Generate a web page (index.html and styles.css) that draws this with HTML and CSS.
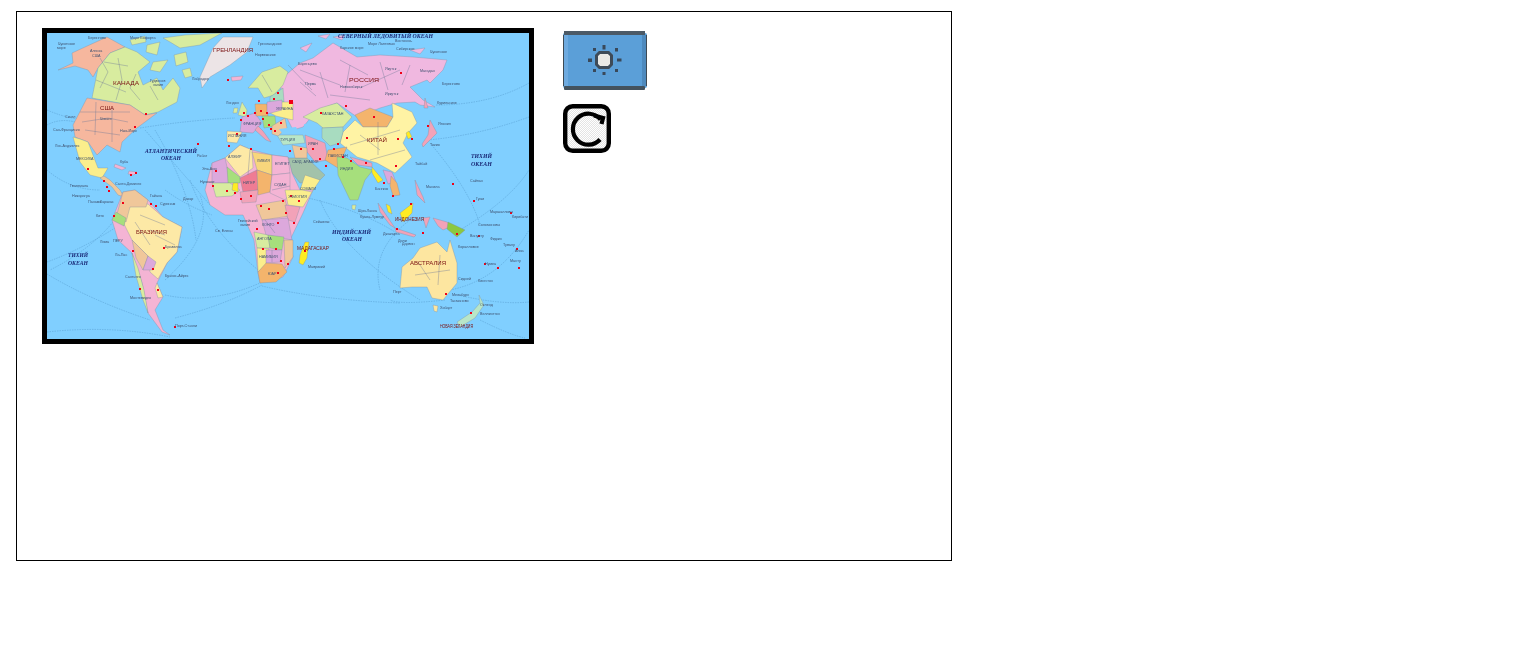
FILE: index.html
```html
<!DOCTYPE html>
<html lang="ru">
<head>
<meta charset="utf-8">
<title>Карта мира</title>
<link rel="stylesheet" href="styles.css">
</head>
<body>
<main class="frame">
  <div class="map-box">
    <svg class="map" viewBox="47 33 482 306" width="482" height="306" role="img" aria-label="Политическая карта мира">
      <defs><filter id="soft" x="0" y="0" width="100%" height="100%"><feGaussianBlur stdDeviation="0.35"/></filter></defs>
      <g filter="url(#soft)">
      <rect class="sea" x="47" y="33" width="482" height="306"/>
      <g class="routes">
        <path d="M47 110 Q75 122 92 118M47 170 Q70 190 100 190M47 125 Q60 118 75 122"/>
        <path d="M140 128 Q190 120 235 118M145 130 Q180 170 210 205M155 130 Q190 190 196 240M165 190 Q185 205 212 215"/>
        <path d="M47 262 Q80 250 115 228M113 222 Q90 250 50 270M47 274 Q90 300 150 320M47 332 Q110 325 170 337"/>
        <path d="M165 295 Q210 305 260 283M175 318 Q225 305 262 285M165 280 Q215 235 200 195M190 180 Q205 225 258 270"/>
        <path d="M262 286 Q320 300 400 303 M320 200 Q340 250 420 300 M410 220 Q370 250 380 290 M304 197 Q360 210 395 232"/>
        <path d="M436 105 Q490 105 529 83M428 140 Q480 135 529 117M430 143 Q470 190 480 225 M460 230 Q510 200 529 170"/>
        <path d="M450 290 Q500 280 529 230M458 295 Q500 305 529 302M480 320 Q510 335 525 338M445 300 Q400 305 390 300"/>
      </g>
      <!-- North America -->
      <path class="c-salmon" d="M58 70 73 63 72 53 85 47 107 37 125 47 110 53 98 68 93 77 88 70 75 66Z"/>
      <path class="c-lime" d="M125 47 110 53 98 68 92 98 130 105 145 115 158 112 177 102 180 88 173 78 163 90 157 78 143 85 138 72 150 62 137 52Z"/>
      <path class="c-lime" d="M147 45 160 42 157 55 146 52ZM163 38 185 35 222 33 200 45 180 48 170 42ZM153 62 168 60 160 72 150 70ZM174 55 186 52 188 62 176 66ZM130 40 145 36 146 42 132 45ZM182 70 190 68 192 76 185 78Z"/>
      <path class="c-salmon" d="M87 98 73 125 75 137 88 142 97 155 107 145 120 152 122 142 137 128 157 113 145 115 130 105Z"/>
      <path class="c-yellow" d="M73 137 80 162 90 175 102 178 108 168 98 168 93 155 88 142 80 139Z"/>
      <path class="c-tan" d="M100 178 112 187 118 195 124 197 120 190 110 180 104 176Z"/>
      <path class="c-pink" d="M115 164 126 168 122 170 114 167ZM129 171 137 172 134 175 128 174Z"/>
      <path class="c-ice" d="M200 77 213 48 223 37 253 37 247 52 230 65 210 77 202 88Z"/>
      <path class="c-pink" d="M231 77 243 76 241 80 232 81Z"/>
      <!-- South America -->
      <path class="c-pink" d="M112 220 123 192 135 190 148 200 163 217 182 227 177 252 167 263 157 283 163 297 155 310 163 330 170 335 162 332 148 313 142 283 132 253 118 240Z"/>
      <path class="c-cream" d="M127 205 148 204 163 217 182 227 177 252 167 263 158 279 150 272 148 256 132 240 124 224Z"/>
      <path class="c-tan" d="M123 192 135 190 148 200 146 207 130 207 126 222 117 214Z"/>
      <path class="c-green" d="M116 212 126 218 124 226 112 220Z"/>
      <path class="c-tan" d="M132 240 148 256 143 270 136 258Z"/>
      <path class="c-lilac" d="M148 256 156 262 153 270 143 270Z"/>
      <path class="c-lime" d="M132 253 138 268 144 290 148 313 143 300 136 276Z"/>
      <path class="c-cream" d="M157 283 163 297 158 298 155 288Z"/>
      <!-- Eurasia -->
      <path class="c-russia" d="M280 80 300 63 313 58 333 43 357 57 380 55 413 57 447 60 443 70 430 83 427 80 410 87 423 100 435 107 420 105 415 102 397 103 380 108 357 117 337 103 317 110 303 127 293 130 285 114 282 96Z"/>
      <path class="c-russia" d="M300 48 312 43 306 52ZM333 37 345 35 342 40ZM410 50 425 48 420 54ZM318 36 330 34 326 39Z"/>
      <path class="c-lime" d="M303 117 320 108 337 103 352 117 343 127 323 128 317 123Z"/>
      <path class="c-orange" d="M355 115 370 108 393 117 387 127 363 127Z"/>
      <path class="c-yellow2" d="M343 132 355 120 363 127 387 127 393 117 392 103 412 112 417 123 408 133 403 143 412 157 395 173 377 163 357 157 340 143Z"/>
      <path class="c-teal" d="M322 128 343 127 343 132 340 143 330 146 322 138Z"/>
      <path class="c-mint" d="M277 135 303 135 305 143 283 145Z"/>
      <path class="c-rose" d="M305 135 325 143 328 160 315 162 307 152Z"/>
      <path class="c-grey" d="M288 158 307 158 325 175 320 180 300 183 292 173Z"/>
      <path class="c-tan" d="M292 145 307 148 307 158 295 158Z"/>
      <path class="c-orange" d="M328 150 347 147 338 168 325 160Z"/>
      <path class="c-green" d="M337 157 347 158 360 167 373 170 365 180 358 200 350 200 338 175Z"/>
      <path class="c-rose" d="M350 157 372 163 372 167 358 165Z"/>
      <path class="c-bright" d="M372 167 383 180 378 183 372 173Z"/>
      <path class="c-lilac" d="M383 170 392 172 396 182 388 184Z"/>
      <path class="c-orange" d="M391 176 397 183 400 195 393 196 390 186Z"/>
      <path class="c-yellow" d="M305 175 320 180 312 192 300 190Z"/>
      <path class="c-bright" d="M409 131 412 137 408 139 406 133Z"/>
      <path class="c-rose" d="M430 120 437 133 428 142 423 147 422 144 428 135Z"/>
      <path class="c-rose" d="M425 98 428 108 424 108Z"/>
      <path class="c-lime" d="M352 205 356 205 355 210 352 209Z"/>
      <path class="c-rose" d="M415 180 423 197 425 203 417 195Z"/>
      <!-- Europe -->
      <path class="c-lime" d="M248 88 262 72 280 66 288 72 283 85 274 95 264 98 258 88Z"/>
      <path class="c-teal" d="M270 97 283 88 284 102 270 103Z"/>
      <path class="c-lime" d="M238 115 242 102 247 110 246 117ZM234 108 238 108 237 113 233 113Z"/>
      <path class="c-lilac" d="M242 117 255 113 262 123 253 133 240 132Z"/>
      <path class="c-orange" d="M255 104 267 104 268 116 256 116Z"/>
      <path class="c-cream" d="M227 131 242 132 237 143 227 142Z"/>
      <path class="c-green" d="M262 116 275 116 276 126 264 128Z"/>
      <path class="c-rose" d="M258 126 263 131 271 142 266 140 255 130Z"/>
      <path class="c-yellow" d="M280 102 293 102 293 120 276 116 268 112Z"/>
      <path class="c-tan" d="M272 126 285 118 287 128 278 136 272 134Z"/>
      <path class="c-lilac" d="M267 102 282 100 282 110 267 114Z"/>
      <path class="sea" d="M279 129 296 127 299 133 282 133ZM304 124 309 124 311 136 306 135Z"/>
      <!-- Africa -->
      <path class="c-pink" d="M212 163 225 158 240 145 252 150 272 155 288 157 292 173 300 190 313 190 303 213 290 240 293 257 283 277 260 283 258 273 254 240 243 215 225 215 210 205 205 190Z"/>
      <path class="c-cream" d="M225 158 240 145 252 150 253 168 240 177Z"/>
      <path class="c-apricot" d="M252 152 272 155 272 175 257 170Z"/>
      <path class="c-pink" d="M272 155 288 157 290 173 272 175Z"/>
      <path class="c-lilac" d="M212 163 225 158 227 167 230 183 212 183Z"/>
      <path class="c-green" d="M227 167 240 177 240 183 228 183Z"/>
      <path class="c-red" d="M240 178 257 170 258 190 243 192Z"/>
      <path class="c-orange" d="M257 170 272 175 270 192 258 195Z"/>
      <path class="c-pink" d="M272 175 290 173 290 193 285 200 270 193Z"/>
      <path class="c-lime" d="M212 183 230 183 240 190 232 196 216 197Z"/>
      <path class="c-bright" d="M233 183 238 183 238 192 232 190Z"/>
      <path class="c-rose" d="M240 192 258 190 256 202 242 203Z"/>
      <path class="c-yellow" d="M285 190 302 190 312 192 303 207 288 205Z"/>
      <path class="c-tan" d="M256 205 285 200 290 216 262 220Z"/>
      <path class="c-rose" d="M285 205 300 207 295 222 288 220Z"/>
      <path class="c-lilac" d="M262 220 288 218 292 240 266 235Z"/>
      <path class="c-lime" d="M254 232 268 235 270 248 257 248Z"/>
      <path class="c-green" d="M268 235 284 237 282 250 270 248Z"/>
      <path class="c-yellow" d="M257 248 269 249 266 265 258 272Z"/>
      <path class="c-lilac" d="M266 250 282 250 280 262 266 263Z"/>
      <path class="c-orange" d="M258 272 266 263 282 264 287 272 276 282 260 283Z"/>
      <path class="c-tan" d="M284 240 293 240 293 257 285 268Z"/>
      <path class="c-bright" d="M305 242 309 242 307 258 303 265 299 263 300 255Z"/>
      <!-- Oceania -->
      <path class="c-cream2" d="M400 288 402 267 413 258 420 248 437 242 447 252 450 240 457 263 457 283 443 300 432 298 427 287 412 287Z"/>
      <path class="c-cream2" d="M433 305 438 306 437 312 434 311Z"/>
      <path class="c-mint" d="M457 322 472 312 480 303 479 295 484 305 475 318 460 327Z"/>
      <path class="c-rose" d="M433 218 447 222 452 226 443 230 438 226Z"/>
      <path class="c-leaf" d="M448 222 465 230 457 237 447 229Z"/>
      <path class="c-rose" d="M378 203 395 228 390 225 380 212ZM395 228 416 235 414 237 396 232ZM423 218 430 217 426 228Z"/>
      <path class="c-bright" d="M400 213 413 203 412 213 403 222ZM386 204 390 206 392 214 388 212Z"/>
      <!-- borders and rivers -->
      <path class="borders" d="M100 58 108 72 100 88M118 58 122 80 116 100M136 74 130 88 140 100M150 86 158 100M104 62 128 66M96 80 126 92M82 122 108 118 128 122M96 102 95 135M112 108 112 142M80 112 130 112M85 130 120 135M350 65 345 92M380 62 388 90M410 65 402 85M320 72 328 98M300 82 316 96M340 60 368 75M300 70 340 85M360 88 400 70M330 95 370 100M360 135 380 150M378 122 378 155M350 145 400 130M370 160 405 150M165 235 150 230M140 215 165 225M135 222 150 245M155 235 175 245M272 190 290 186M250 150 248 175M265 220 275 233M272 250 272 262M418 262 430 280M440 255 438 285M415 275 450 270M288 65 312 90M262 75 272 92"/>
      <!-- capital dots -->
      <path class="dots" d="M289 100h4v4h-4zM134 126h2v2h-2zM145 113h2v2h-2zM87 168h2v2h-2zM103 180h2v2h-2zM106 186h2v2h-2zM108 190h2v2h-2zM135 172h2v2h-2zM130 174h2v2h-2zM122 202h2v2h-2zM150 203h2v2h-2zM155 205h2v2h-2zM113 215h2v2h-2zM163 247h2v2h-2zM132 250h2v2h-2zM152 268h2v2h-2zM139 288h2v2h-2zM157 289h2v2h-2zM174 326h2v2h-2zM227 79h2v2h-2zM243 112h2v2h-2zM240 119h2v2h-2zM247 115h2v2h-2zM254 112h2v2h-2zM260 110h2v2h-2zM262 118h2v2h-2zM266 112h2v2h-2zM268 124h2v2h-2zM270 128h2v2h-2zM274 130h2v2h-2zM280 122h2v2h-2zM258 100h2v2h-2zM273 98h2v2h-2zM277 92h2v2h-2zM236 133h2v2h-2zM250 148h2v2h-2zM228 145h2v2h-2zM289 150h2v2h-2zM300 148h2v2h-2zM312 148h2v2h-2zM319 158h2v2h-2zM325 165h2v2h-2zM337 143h2v2h-2zM346 137h2v2h-2zM333 148h2v2h-2zM342 156h2v2h-2zM350 160h2v2h-2zM365 162h2v2h-2zM383 182h2v2h-2zM392 195h2v2h-2zM395 165h2v2h-2zM397 138h2v2h-2zM411 138h2v2h-2zM373 116h2v2h-2zM320 112h2v2h-2zM345 105h2v2h-2zM215 170h2v2h-2zM212 185h2v2h-2zM226 190h2v2h-2zM234 192h2v2h-2zM240 198h2v2h-2zM250 195h2v2h-2zM260 205h2v2h-2zM268 208h2v2h-2zM282 200h2v2h-2zM290 195h2v2h-2zM298 200h2v2h-2zM285 212h2v2h-2zM293 222h2v2h-2zM277 222h2v2h-2zM256 228h2v2h-2zM262 248h2v2h-2zM275 248h2v2h-2zM280 260h2v2h-2zM287 263h2v2h-2zM277 272h2v2h-2zM304 250h2v2h-2zM396 228h2v2h-2zM410 203h2v2h-2zM422 232h2v2h-2zM456 233h2v2h-2zM445 293h2v2h-2zM470 312h2v2h-2zM478 235h2v2h-2zM484 263h2v2h-2zM497 267h2v2h-2zM510 212h2v2h-2zM518 267h2v2h-2zM516 248h2v2h-2zM473 200h2v2h-2zM452 183h2v2h-2zM427 125h2v2h-2zM197 143h2v2h-2zM400 72h2v2h-2z"/>
      <!-- place names -->
      <g class="places">
        <text x="58" y="45">Чукотское</text><text x="57" y="49">море</text>
        <text x="130" y="39">Море Бофорта</text><text x="88" y="39">Берингово</text>
        <text x="90" y="52">Аляска</text><text x="92" y="57">США</text>
        <text x="150" y="82">Гудзонов</text><text x="153" y="86">залив</text>
        <text x="258" y="45">Гренландское</text><text x="255" y="56">Норвежское</text>
        <text x="192" y="80">Лабрадор</text><text x="65" y="118">Сиэтл</text>
        <text x="53" y="131">Сан-Франциско</text><text x="55" y="147">Лос-Анджелес</text>
        <text x="100" y="120">Чикаго</text><text x="120" y="132">Нью-Йорк</text>
        <text x="120" y="163">Куба</text><text x="76" y="160">МЕКСИКА</text>
        <text x="115" y="185">Санто-Доминго</text><text x="70" y="187">Гватемала</text>
        <text x="72" y="197">Никарагуа</text><text x="88" y="203">Панама</text>
        <text x="100" y="203">Каракас</text><text x="150" y="197">Гайана</text>
        <text x="160" y="205">Суринам</text><text x="96" y="217">Кито</text>
        <text x="113" y="242">ПЕРУ</text><text x="100" y="243">Лима</text>
        <text x="115" y="256">Ла-Пас</text><text x="125" y="278">Сантьяго</text>
        <text x="165" y="248">Бразилиа</text><text x="165" y="277">Буэнос-Айрес</text>
        <text x="130" y="299">Монтевидео</text><text x="175" y="327">Порт-Стэнли</text>
        <text x="183" y="200">Дакар</text><text x="197" y="157">Рабат</text>
        <text x="202" y="170">Эль-Аюн</text><text x="200" y="183">Нуакшот</text>
        <text x="228" y="158">АЛЖИР</text><text x="257" y="162">ЛИВИЯ</text>
        <text x="275" y="165">ЕГИПЕТ</text><text x="243" y="184">НИГЕР</text>
        <text x="274" y="186">СУДАН</text><text x="238" y="222">Гвинейский</text>
        <text x="240" y="226">залив</text><text x="215" y="232">Св. Елены</text>
        <text x="262" y="226">КОНГО</text><text x="257" y="240">АНГОЛА</text>
        <text x="259" y="258">НАМИБИЯ</text><text x="268" y="275">ЮАР</text>
        <text x="300" y="190">СОМАЛИ</text><text x="288" y="198">ЭФИОПИЯ</text>
        <text x="313" y="223">Сейшелы</text><text x="308" y="268">Маврикий</text>
        <text x="292" y="163">САУД. АРАВИЯ</text><text x="308" y="145">ИРАН</text>
        <text x="280" y="141">ТУРЦИЯ</text><text x="322" y="115">КАЗАХСТАН</text>
        <text x="340" y="170">ИНДИЯ</text><text x="328" y="157">ПАКИСТАН</text>
        <text x="226" y="104">Лондон</text><text x="243" y="125">ФРАНЦИЯ</text>
        <text x="228" y="137">ИСПАНИЯ</text><text x="276" y="110">УКРАИНА</text>
        <text x="298" y="65">Баренцево</text><text x="340" y="49">Карское море</text>
        <text x="368" y="45">Море Лаптевых</text><text x="395" y="42">Восточно-</text>
        <text x="396" y="50">Сибирское</text><text x="430" y="53">Чукотское</text>
        <text x="385" y="70">Якутск</text><text x="305" y="85">Пермь</text>
        <text x="340" y="88">Новосибирск</text><text x="385" y="95">Иркутск</text>
        <text x="420" y="72">Магадан</text><text x="442" y="85">Берингово</text>
        <text x="437" y="104">Курильские</text><text x="438" y="125">Япония</text>
        <text x="430" y="146">Токио</text><text x="415" y="165">Тайбэй</text>
        <text x="426" y="188">Манила</text><text x="375" y="190">Бангкок</text>
        <text x="358" y="212">Шри-Ланка</text>
        <text x="360" y="218">Куала-Лумпур</text><text x="383" y="235">Джакарта</text>
        <text x="398" y="242">Дили</text><text x="476" y="200">Гуам</text>
        <text x="470" y="182">Сайпан</text><text x="490" y="213">Маршалловы</text>
        <text x="512" y="218">Кирибати</text><text x="478" y="226">Соломоновы</text>
        <text x="470" y="237">Вануату</text><text x="490" y="240">Фиджи</text>
        <text x="503" y="246">Тувалу</text><text x="510" y="262">Манту</text>
        <text x="515" y="252">Апиа</text><text x="485" y="265">Нумеа</text>
        <text x="478" y="282">Кингстон</text><text x="458" y="280">Сидней</text>
        <text x="452" y="296">Мельбурн</text><text x="440" y="309">Хобарт</text>
        <text x="480" y="306">Окленд</text><text x="480" y="315">Веллингтон</text>
        <text x="450" y="302">Тасманово</text><text x="393" y="293">Перт</text>
        <text x="402" y="245">Дарвин</text><text x="458" y="248">Коралловое</text>
      </g>
      <!-- country and ocean labels -->
      <g class="country">
        <text x="213" y="52" textLength="40" lengthAdjust="spacingAndGlyphs">ГРЕНЛАНДИЯ</text>
        <text x="113" y="85" textLength="26" lengthAdjust="spacingAndGlyphs">КАНАДА</text>
        <text x="100" y="110" textLength="14" lengthAdjust="spacingAndGlyphs">США</text>
        <text x="349" y="82" textLength="30" lengthAdjust="spacingAndGlyphs">РОССИЯ</text>
        <text x="367" y="142" textLength="20" lengthAdjust="spacingAndGlyphs">КИТАЙ</text>
        <text x="136" y="234" textLength="31" lengthAdjust="spacingAndGlyphs">БРАЗИЛИЯ</text>
        <text x="297" y="250" textLength="32" lengthAdjust="spacingAndGlyphs">МАДАГАСКАР</text>
        <text x="395" y="221" textLength="29" lengthAdjust="spacingAndGlyphs">ИНДОНЕЗИЯ</text>
        <text x="410" y="265" textLength="36" lengthAdjust="spacingAndGlyphs">АВСТРАЛИЯ</text>
        <text class="minor" x="440" y="328" textLength="33" lengthAdjust="spacingAndGlyphs">НОВАЯ ЗЕЛАНДИЯ</text>
      </g>
      <g class="ocean">
        <text class="minor" x="338" y="38" textLength="95" lengthAdjust="spacingAndGlyphs">СЕВЕРНЫЙ ЛЕДОВИТЫЙ ОКЕАН</text>
        <text x="145" y="153" textLength="52" lengthAdjust="spacingAndGlyphs">АТЛАНТИЧЕСКИЙ</text>
        <text x="161" y="160" textLength="20" lengthAdjust="spacingAndGlyphs">ОКЕАН</text>
        <text x="471" y="158" textLength="21" lengthAdjust="spacingAndGlyphs">ТИХИЙ</text>
        <text x="471" y="166" textLength="21" lengthAdjust="spacingAndGlyphs">ОКЕАН</text>
        <text x="68" y="257" textLength="20" lengthAdjust="spacingAndGlyphs">ТИХИЙ</text>
        <text x="68" y="265" textLength="20" lengthAdjust="spacingAndGlyphs">ОКЕАН</text>
        <text x="332" y="234" textLength="39" lengthAdjust="spacingAndGlyphs">ИНДИЙСКИЙ</text>
        <text x="342" y="241" textLength="20" lengthAdjust="spacingAndGlyphs">ОКЕАН</text>
      </g>
      </g>
    </svg>
  </div>
  <div class="controls">
    <button class="light-button" type="button" aria-label="Подсветка">
      <svg viewBox="0 0 84 59" width="84" height="59">
        <rect class="lb-body" x="0" y="2" width="84" height="55" rx="2"/>
        <rect class="lb-left" x="1" y="4" width="4" height="51"/>
        <rect class="lb-right" x="79" y="4" width="4.500" height="51"/>
        <rect class="lb-top" x="1" y="0" width="81" height="4"/>
        <rect class="lb-bottom" x="1" y="55" width="81" height="4" rx="1"/>
        <path class="lb-edge" d="M0.500 4V55M83.500 4V55"/>
        <path class="lb-rays" d="M39.500 14h3v4.500h-3zM39.500 41h3v3h-3zM25 27.500h4v3.500h-4zM54 27.500h4.500v3h-4.500zM30 17h3v3h-3zM52 17h3v3.500h-3zM30 38h3v3h-3zM52 38h3v3h-3z"/>
        <path class="lb-sun" d="M36.500 21.500h9l3 3v9l-3 3h-9l-3-3v-9Z"/>
      </svg>
    </button>
    <button class="refresh-button" type="button" aria-label="Обновить">
      <svg viewBox="0 0 48 49" width="48" height="49">
        <defs><pattern id="dither" width="2" height="2" patternUnits="userSpaceOnUse"><rect width="2" height="2" fill="#fff"/><rect width="1" height="1" fill="#e4e4e4"/><rect x="1" y="1" width="1" height="1" fill="#e4e4e4"/></pattern></defs>
        <rect class="rb-frame" x="2.200" y="2.200" width="43.600" height="44.600" rx="7.500" fill="url(#dither)"/>
        <path class="rb-arc" d="M37.500 15.500A15.500 15.500 0 1 0 37 35.500"/>
        <path class="rb-arrow" d="M31 11.500 40 14 38.500 20"/>
      </svg>
    </button>
  </div>
</main>
</body>
</html>
```
FILE: styles.css
```css
html, body { margin: 0; padding: 0; background: #fff; }
body { padding: 11px 16px; font-family: "Liberation Sans", Arial, sans-serif; }
.frame { box-sizing: border-box; width: 936px; height: 550px; border: 1px solid #000; padding: 16px 25px; display: flex; align-items: flex-start; gap: 29px; }
.map-box { border: 5px solid #000; line-height: 0; }
.map { display: block; }
.controls { display: flex; flex-direction: column; gap: 14px; padding-top: 3px; }
.controls button { display: block; padding: 0; margin: 0; border: 0; background: none; line-height: 0; }
.controls svg { display: block; }

.sea { fill: #80cfff; }
.routes { fill: none; stroke: #4f93c8; stroke-width: .45; stroke-dasharray: 1.5 1; }
.c-salmon { fill: #f6b79e; } .c-lime { fill: #d8ec9f; } .c-yellow { fill: #fbee8c; }
.c-tan { fill: #f0c79a; } .c-pink { fill: #f4b4d4; } .c-ice { fill: #ece4e6; }
.c-cream { fill: #fde9a6; } .c-cream2 { fill: #fde6a0; } .c-green { fill: #a6df7c; }
.c-lilac { fill: #dca8dc; } .c-russia { fill: #f0b8e0; } .c-orange { fill: #f4b46c; }
.c-yellow2 { fill: #fff3a4; } .c-teal { fill: #a8dcc0; } .c-mint { fill: #b8e6c8; }
.c-rose { fill: #f2a2b8; } .c-grey { fill: #a2c2aa; } .c-bright { fill: #ffec20; }
.c-apricot { fill: #f8d67c; } .c-red { fill: #ef7c94; } .c-leaf { fill: #8cc840; }
.c-salmon, .c-lime, .c-yellow, .c-tan, .c-pink, .c-cream, .c-cream2, .c-green, .c-lilac, .c-russia, .c-orange, .c-yellow2, .c-teal, .c-mint, .c-rose, .c-grey, .c-bright, .c-apricot, .c-red, .c-leaf, .c-ice { stroke: #7a8ca0; stroke-width: .35; }
.borders { fill: none; stroke: #6f7a98; stroke-width: .4; }
.dots { fill: #f00014; }
.places text { font-family: "Liberation Sans", sans-serif; font-size: 3.700px; fill: #3f5270; }
.country text { font-family: "Liberation Sans", sans-serif; font-size: 6px; fill: #7a1010; }
.country text.minor { font-size: 5px; }
.ocean text { font-family: "Liberation Serif", serif; font-size: 6.500px; font-weight: bold; font-style: italic; fill: #1a2a78; }
.ocean text.minor { font-size: 6px; }

.lb-body { fill: #5b9fd8; }
.lb-left { fill: #6fabe0; }
.lb-right { fill: #4e8abe; }
.lb-top { fill: #4c5a66; }
.lb-bottom { fill: #43525e; }
.lb-edge { fill: none; stroke: #3e4a54; stroke-width: 1; }
.lb-rays { fill: #39495a; }
.lb-sun { fill: #e9e9e6; stroke: #3e4b58; stroke-width: 3; }
.rb-frame { stroke: #000; stroke-width: 4.400; }
.rb-arc, .rb-arrow { fill: none; stroke: #000; stroke-width: 4.200; }
```
